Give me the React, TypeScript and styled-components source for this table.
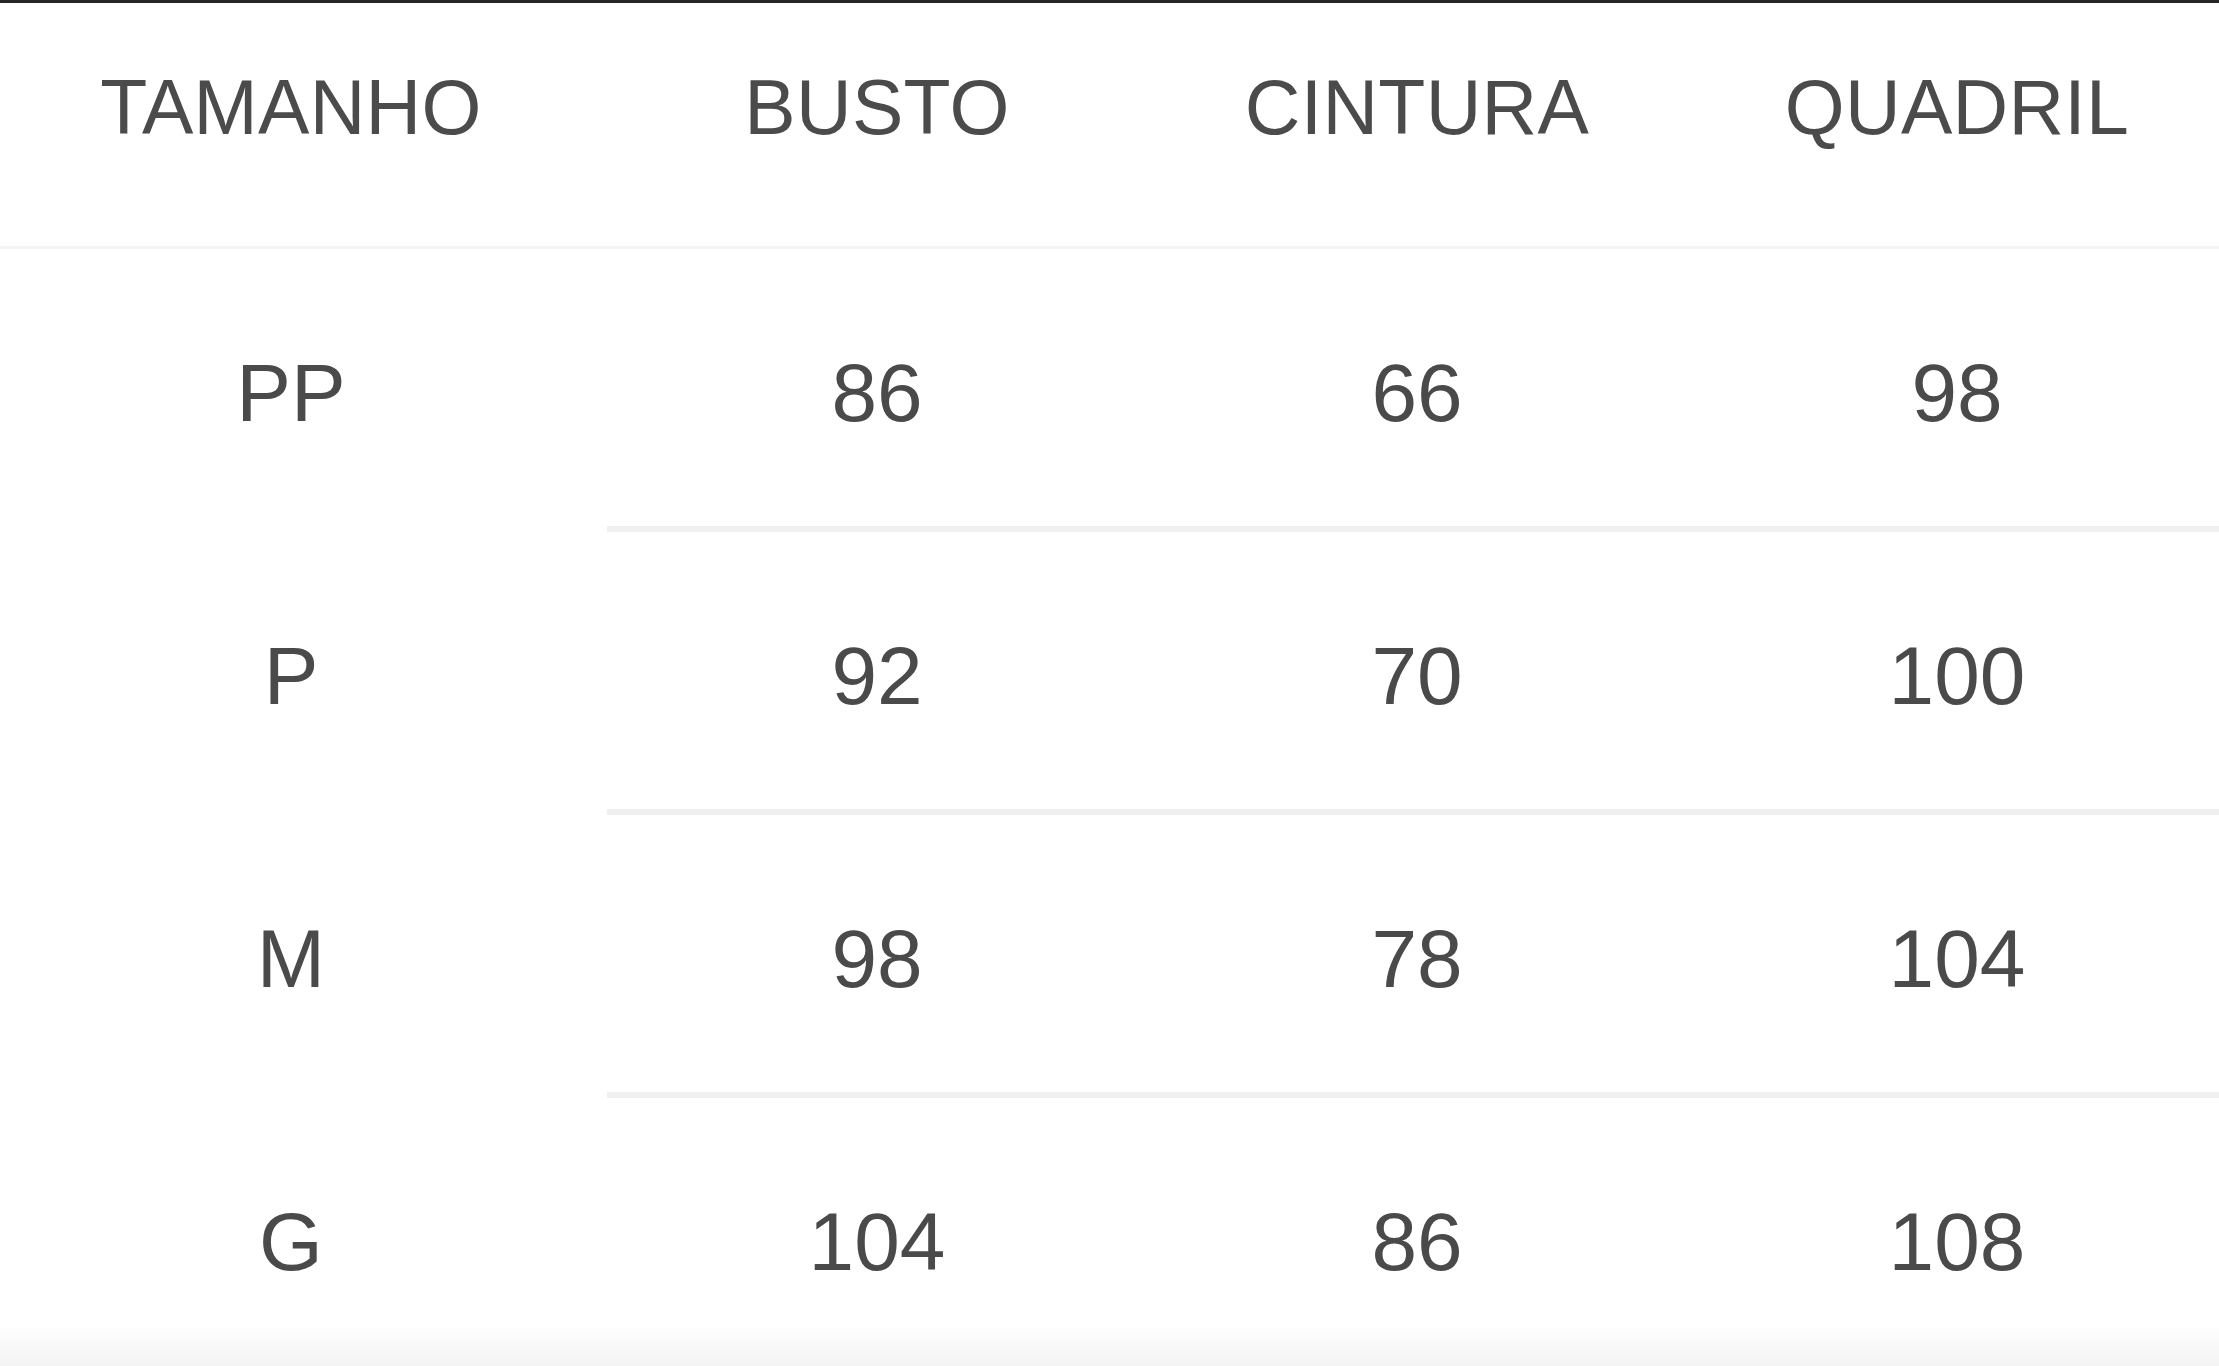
import styled, { createGlobalStyle } from 'styled-components';

const GlobalStyle = createGlobalStyle`
  html, body {
    margin: 0;
    padding: 0;
    background: #fff;
    overflow: hidden;
  }
  body {
    font-family: 'Liberation Sans', Arial, Helvetica, sans-serif;
    color: #4a4a4a;
  }
`;

const header = ['TAMANHO', 'BUSTO', 'CINTURA', 'QUADRIL'];

const rows = [
  ['PP', '86', '66', '98'],
  ['P', '92', '70', '100'],
  ['M', '98', '78', '104'],
  ['G', '104', '86', '108'],
];

export default function App() {
  return (
    <>
      <GlobalStyle />
      <Page>
        <TopEdge />
        <Table>
          <HeaderRow>
            {header.map((h, i) => (
              <HeadCell key={h} $first={i === 0}>
                {h}
              </HeadCell>
            ))}
          </HeaderRow>

          {rows.map((r, ri) => (
            <Row key={r[0]} $last={ri === rows.length - 1}>
              {r.map((v, ci) => (
                <Cell key={ci} $first={ci === 0} $divider={ci > 0 && ri < rows.length - 1}>
                  {v}
                </Cell>
              ))}
            </Row>
          ))}
        </Table>
        <BottomFade />
      </Page>
    </>
  );
}

const Page = styled.div`
  display: flex;
  flex-direction: column;
  height: 100vh;
  width: 2227px;
  background: #fff;
`;

// the thin dark edge at the very top of the shot
const TopEdge = styled.div`
  height: 3px;
  background: #262626;
`;

const Table = styled.div`
  flex: 1;
  display: flex;
  flex-direction: column;
`;

const columns = `607px 540px 540px 540px`;

const HeaderRow = styled.div`
  display: grid;
  grid-template-columns: ${columns};
  height: 243px;
  border-bottom: 3px solid #f4f4f4;
`;

const HeadCell = styled.div<{ $first?: boolean }>`
  display: flex;
  justify-content: center;
  align-items: flex-start;
  padding-top: 66px;
  padding-right: ${(p) => (p.$first ? '25px' : '0')};
  font-size: 77px;
  line-height: 1;
  letter-spacing: 0.3px;
  color: #4b4b4b;
`;

const Row = styled.div<{ $last?: boolean }>`
  display: grid;
  grid-template-columns: ${columns};
  height: ${(p) => (p.$last ? 'auto' : '283px')};
  flex: ${(p) => (p.$last ? '1' : 'none')};
`;

const Cell = styled.div<{ $first?: boolean; $divider?: boolean }>`
  display: flex;
  justify-content: center;
  align-items: flex-start;
  padding-top: 103px;
  padding-right: ${(p) => (p.$first ? '25px' : '0')};
  border-bottom: ${(p) => (p.$divider ? '6px solid #f0f0f0' : 'none')};
  font-size: 82px;
  line-height: 1;
  color: #4a4a4a;
`;

const BottomFade = styled.div`
  height: 38px;
  background: linear-gradient(#fdfdfd, #f4f4f4);
`;
